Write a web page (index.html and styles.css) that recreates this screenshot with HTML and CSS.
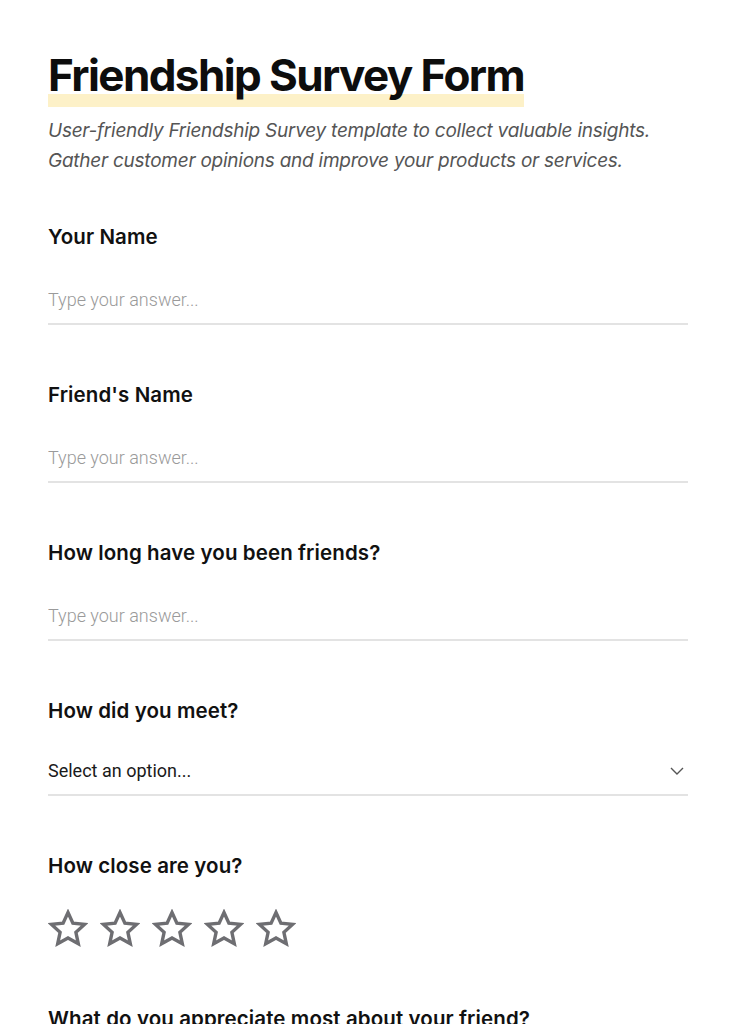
FILE: index.html
```html
<!DOCTYPE html>
<html lang="en">
<head>
  <meta charset="UTF-8">
  <meta name="viewport" content="width=device-width, initial-scale=1.0">
  <title>Friendship Survey Form</title>
  <link rel="stylesheet" href="styles.css">
</head>
<body>
  <div class="form-page">
    <h1 class="title">Friendship Survey Form</h1>
    <p class="intro">User-friendly Friendship Survey template to collect valuable insights.<br>Gather customer opinions and improve your products or services.</p>

    <div class="field">
      <label class="question" for="yourName">Your Name</label>
      <input type="text" id="yourName" class="answer" placeholder="Type your answer..." autocomplete="off">
    </div>

    <div class="field">
      <label class="question" for="friendName">Friend's Name</label>
      <input type="text" id="friendName" class="answer" placeholder="Type your answer..." autocomplete="off">
    </div>

    <div class="field">
      <label class="question" for="howLong">How long have you been friends?</label>
      <input type="text" id="howLong" class="answer" placeholder="Type your answer..." autocomplete="off">
    </div>

    <div class="field">
      <label class="question" for="howMeet">How did you meet?</label>
      <div class="select-wrap">
        <select id="howMeet" class="answer select">
          <option>Select an option...</option>
          <option>School</option>
          <option>Work</option>
          <option>Online</option>
          <option>Other</option>
        </select>
        <svg class="chevron" width="14" height="8" viewBox="0 0 14 8"><path d="M1 1l6 6 6-6" fill="none" stroke="#555" stroke-width="1.4"/></svg>
      </div>
    </div>

    <div class="field">
      <p class="question">How close are you?</p>
      <div class="stars">
        <svg class="star" viewBox="0 0 40 40"><path d="M20 3.5l4.9 10.6 11.6 1.3-8.6 7.9 2.4 11.4L20 28.9 9.7 34.7l2.4-11.4-8.6-7.9 11.6-1.3z" fill="none" stroke="#6e6e72" stroke-width="3.4"/></svg>
        <svg class="star" viewBox="0 0 40 40"><path d="M20 3.5l4.9 10.6 11.6 1.3-8.6 7.9 2.4 11.4L20 28.9 9.7 34.7l2.4-11.4-8.6-7.9 11.6-1.3z" fill="none" stroke="#6e6e72" stroke-width="3.4"/></svg>
        <svg class="star" viewBox="0 0 40 40"><path d="M20 3.5l4.9 10.6 11.6 1.3-8.6 7.9 2.4 11.4L20 28.9 9.7 34.7l2.4-11.4-8.6-7.9 11.6-1.3z" fill="none" stroke="#6e6e72" stroke-width="3.4"/></svg>
        <svg class="star" viewBox="0 0 40 40"><path d="M20 3.5l4.9 10.6 11.6 1.3-8.6 7.9 2.4 11.4L20 28.9 9.7 34.7l2.4-11.4-8.6-7.9 11.6-1.3z" fill="none" stroke="#6e6e72" stroke-width="3.4"/></svg>
        <svg class="star" viewBox="0 0 40 40"><path d="M20 3.5l4.9 10.6 11.6 1.3-8.6 7.9 2.4 11.4L20 28.9 9.7 34.7l2.4-11.4-8.6-7.9 11.6-1.3z" fill="none" stroke="#6e6e72" stroke-width="3.4"/></svg>
      </div>
    </div>

    <div class="field">
      <label class="question" for="appreciate">What do you appreciate most about your friend?</label>
      <input type="text" id="appreciate" class="answer" placeholder="Type your answer..." autocomplete="off">
    </div>
  </div>
</body>
</html>
```

FILE: styles.css
```css
body {
  margin: 0;
  background: white;
  font-family: Inter, "Noto Sans", sans-serif;
  color: #111;
}

.form-page {
  width: 640px;
  padding: 49px 48px 40px;
}

.title {
  display: inline-block;
  margin: 0;
  padding-bottom: 6px;
  font-size: 44px;
  line-height: 52px;
  font-weight: 700;
  letter-spacing: -1.6px;
  color: #0d0d0d;
  background: linear-gradient(to top, #fdf1c8 13px, transparent 13px);
}

.intro {
  margin: 9px 0 47px;
  font-size: 19px;
  line-height: 30px;
  font-style: italic;
  color: #555;
  letter-spacing: -0.25px;
}

.field {
  margin-bottom: 56px;
}

.question {
  display: block;
  margin: 0;
  font-size: 20.5px;
  line-height: 28px;
  font-weight: 600;
  letter-spacing: 0.1px;
  color: #111;
}

.answer {
  display: block;
  box-sizing: border-box;
  width: 100%;
  height: 50px;
  margin-top: 24px;
  padding: 0;
  border: none;
  border-bottom: 2px solid #e3e3e3;
  outline: none;
  background: transparent;
  font-family: Roboto, "Noto Sans", sans-serif;
  font-size: 18px;
  font-weight: 300;
  color: #222;
}

.answer::placeholder {
  color: #9a9a9a;
}

.select-wrap {
  position: relative;
  margin-top: 22px;
}

.select {
  margin-top: 0;
  height: 49px;
  appearance: none;
  -webkit-appearance: none;
  font-weight: 400;
  color: #1a1a1a;
}

.chevron {
  position: absolute;
  right: 4px;
  top: 20px;
}

.stars {
  display: flex;
  gap: 12px;
  margin-top: 29px;
  margin-bottom: 14px;
}

.star {
  width: 40px;
  height: 40px;
}
```
